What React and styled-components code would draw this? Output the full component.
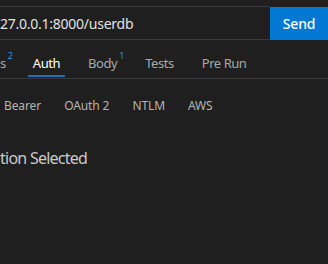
import React from "react";
import styled, { createGlobalStyle } from "styled-components";

const Global = createGlobalStyle`
  html, body {
    margin: 0;
    padding: 0;
    background: #1f1f1f;
    overflow: hidden;
  }
  body {
    font-family: "Noto Sans", "Open Sans", sans-serif;
  }
`;

const Panel = styled.div`
  width: 328px;
  height: 264px;
  overflow: hidden;
  background: #1f1f1f;
  display: flex;
  flex-direction: column;
`;

const UrlBar = styled.div`
  display: flex;
  margin-top: 6px;
  height: 34px;
`;

const UrlField = styled.div`
  flex: 1;
  overflow: hidden;
  border-top: 1px solid #3a3a3a;
  border-bottom: 1px solid #3a3a3a;
  display: flex;
  align-items: center;
  padding-top: 1px;
  white-space: nowrap;
  font-size: 14px;
  letter-spacing: -0.25px;
  color: #e2e2e2;
`;

const SendButton = styled.button`
  width: 58px;
  margin: 1px 0 0;
  border: none;
  background: #0078d4;
  color: #ffffff;
  font-family: "Noto Sans", "Open Sans", sans-serif;
  font-size: 14px;
  font-weight: 500;
  letter-spacing: -0.2px;
  padding: 0;
`;

const Tabs = styled.div`
  display: flex;
  gap: 18px;
  margin-top: 13px;
  border-bottom: 1px solid #3a3a3a;
  white-space: nowrap;
`;

const Tab = styled.div`
  padding: 0 5px 2px;
  font-size: 13px;
  line-height: 20px;
  letter-spacing: -0.45px;
  color: ${(p) => (p.active ? "#ffffff" : "#a8a8a8")};
  border-bottom: 2px solid ${(p) => (p.active ? "#1f6fb8" : "transparent")};
  margin-bottom: 1px;

  &:first-child {
    padding-left: 0;
    padding-right: 4px;
  }
`;

const Label = styled.span`
  position: relative;
`;

const Count = styled.span`
  position: absolute;
  left: 100%;
  top: -4px;
  margin-left: 2px;
  color: #3794d8;
  font-size: 9px;
  line-height: 12px;
  letter-spacing: 0;
`;

const AuthTypes = styled.div`
  display: flex;
  gap: 23px;
  margin-top: 17px;
  padding-left: 4px;
  white-space: nowrap;
`;

const AuthType = styled.div`
  font-size: 12px;
  line-height: 20px;
  letter-spacing: -0.1px;
  color: #b4b4b4;
`;

const Empty = styled.div`
  margin-top: 31px;
  font-size: 16px;
  line-height: 22px;
  letter-spacing: -0.75px;
  color: #cacaca;
  white-space: nowrap;
`;

const tabs = [
  { name: "s", count: 2 },
  { name: "Auth", active: true },
  { name: "Body", count: 1 },
  { name: "Tests" },
  { name: "Pre Run" },
];

const authTypes = ["Bearer", "OAuth 2", "NTLM", "AWS"];

export default function App() {
  return (
    <Panel>
      <Global />
      <UrlBar>
        <UrlField>27.0.0.1:8000/userdb</UrlField>
        <SendButton>Send</SendButton>
      </UrlBar>
      <Tabs>
        {tabs.map((t) => (
          <Tab key={t.name} active={t.active}>
            <Label>
              {t.name}
              {t.count ? <Count>{t.count}</Count> : null}
            </Label>
          </Tab>
        ))}
      </Tabs>
      <AuthTypes>
        {authTypes.map((a) => (
          <AuthType key={a}>{a}</AuthType>
        ))}
      </AuthTypes>
      <Empty>tion Selected</Empty>
    </Panel>
  );
}
